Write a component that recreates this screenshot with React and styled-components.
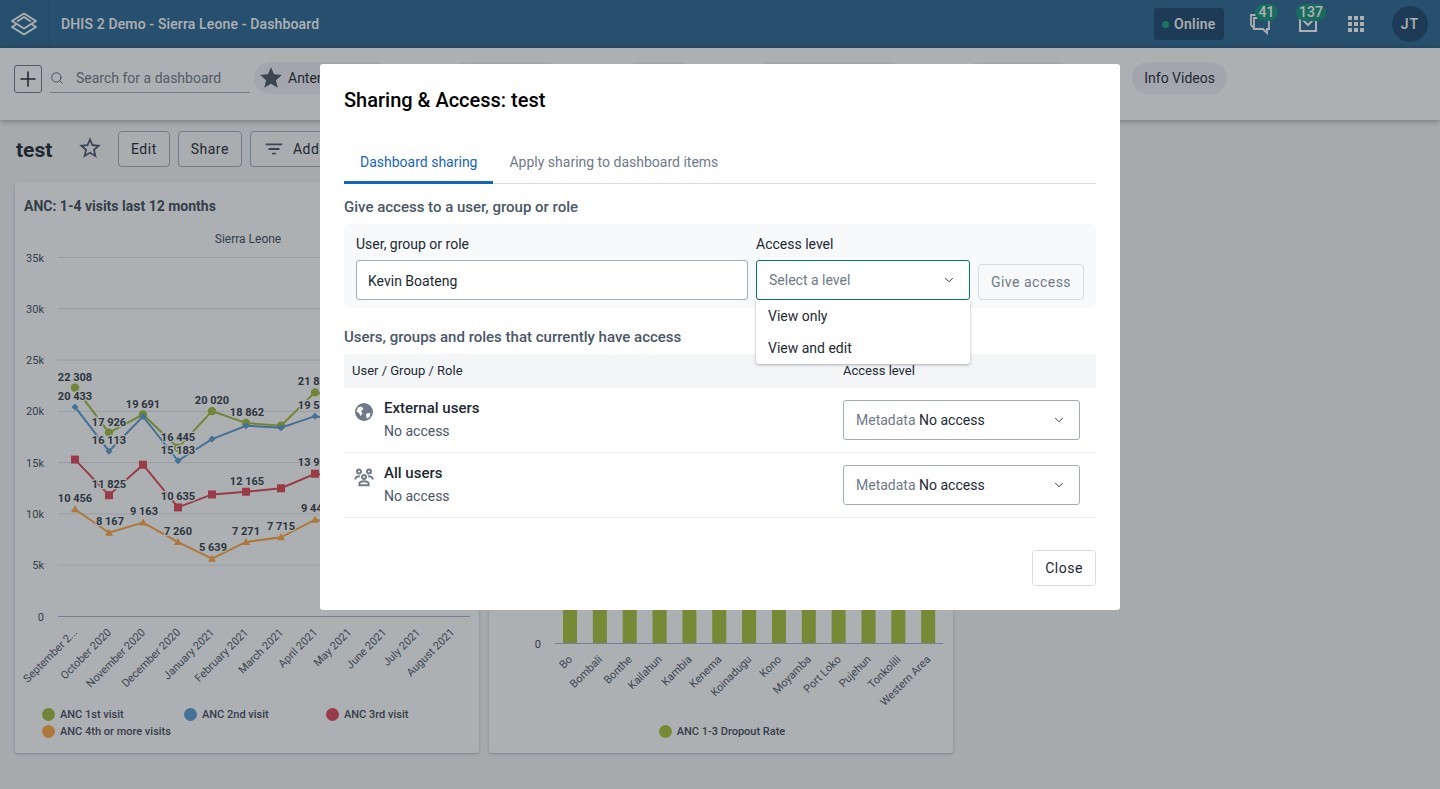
import React from 'react'
import styled, { createGlobalStyle } from 'styled-components'
import { Plus, Search, ChevronDown } from 'lucide-react'
import { MdStar, MdStarBorder, MdFilterList, MdApps } from 'react-icons/md'

const GlobalStyle = createGlobalStyle`
  html, body { margin: 0; padding: 0; height: 100%; overflow: hidden; }
  body {
    background: #f4f6f8;
    font-family: Roboto, "Liberation Sans", sans-serif;
    color: #212934;
  }
  * { box-sizing: border-box; }
`

const Page = styled.div`
  width: 1440px;
  height: 789px;
  overflow: hidden;
  background: #f4f6f8;
`

const Header = styled.header`
  height: 48px;
  background: #2c6693;
  display: flex;
  align-items: center;
  color: #fff;
`

const LogoBox = styled.div`
  width: 49px;
  height: 48px;
  display: flex;
  align-items: center;
  justify-content: center;
  border-right: 1px solid #27608c;
`

const AppTitle = styled.div`
  margin-left: 12px;
  font-size: 14px;
  font-weight: 500;
  letter-spacing: 0.14px;
  flex: 1;
`

const OnlineBadge = styled.div`
  width: 70px;
  height: 32px;
  border-radius: 3px;
  background: #1c476e;
  display: flex;
  align-items: center;
  gap: 5px;
  padding-left: 8px;
  font-size: 14px;
  font-weight: 500;
  letter-spacing: 0.3px;
`

const OnlineDot = styled.span`
  width: 7px;
  height: 7px;
  border-radius: 50%;
  background: #14a184;
`

const HeaderIcon = styled.div`
  position: relative;
  margin-left: 24px;
  width: 24px;
  height: 24px;
  display: flex;
  align-items: center;
  justify-content: center;
`

const CountBadge = styled.span`
  position: absolute;
  top: -8px;
  left: ${(props) => props.$left}px;
  height: 17px;
  min-width: 23px;
  padding: 0 3px;
  border-radius: 9px;
  background: #14927a;
  font-size: 14px;
  font-weight: 500;
  line-height: 17px;
  text-align: center;
`

const Avatar = styled.div`
  width: 36px;
  height: 36px;
  border-radius: 50%;
  background: #1c476e;
  margin-left: 24px;
  margin-right: 12px;
  display: flex;
  align-items: center;
  justify-content: center;
  font-size: 14px;
  font-weight: 500;
  letter-spacing: 1px;
`

const Toolbar = styled.div`
  height: 72px;
  background: #fff;
  box-shadow: 0 1px 6px rgba(0, 0, 0, 0.35);
  padding: 14px 14px 0;
  display: flex;
  align-items: flex-start;
  position: relative;
`

const AddButton = styled.div`
  width: 28px;
  height: 28px;
  margin-top: 3px;
  border: 1px solid #6c7787;
  border-radius: 3px;
  display: flex;
  align-items: center;
  justify-content: center;
`

const SearchBox = styled.div`
  width: 200px;
  height: 28px;
  margin: 3px 4px 0 8px;
  padding-bottom: 2px;
  border-bottom: 1px solid #a0adba;
  display: flex;
  align-items: center;
  gap: 12px;
  font-size: 14px;
  color: #6e7a8a;
`

const ChipRow = styled.div`
  width: 973px;
  display: flex;
  justify-content: space-between;
`

const Chip = styled.div`
  height: 32px;
  padding: 0 12px;
  padding-left: ${(props) => (props.$icon ? 4 : 12)}px;
  border-radius: 16px;
  background: #f0f1f7;
  display: flex;
  align-items: center;
  gap: 4px;
  font-size: 14px;
  white-space: nowrap;
  color: #212934;
`

const TitleRow = styled.div`
  height: 62px;
  padding: 11px 0 0 16px;
  display: flex;
  align-items: flex-start;
  gap: 8px;
`

const DashTitle = styled.h1`
  margin: 5px 0 0;
  width: 54px;
  font-size: 21px;
  line-height: 28px;
  font-weight: 700;
  color: #212934;
`

const StarWrap = styled.div`
  width: 33px;
  margin: 4px 0 0 -1px;
  color: #4a5768;
`

const GhostButton = styled.div`
  height: 36px;
  padding: 0 12px;
  border: 1px solid #a0adba;
  border-radius: 4px;
  display: flex;
  align-items: center;
  gap: 8px;
  font-size: 14px;
  letter-spacing: 0.5px;
  color: #212934;
  background: #f9fafb;
`

const CardGrid = styled.div`
  display: grid;
  grid-template-columns: 464px 464px;
  gap: 10px;
  padding-left: 15px;
`

const Card = styled.section`
  height: 571px;
  background: #fff;
  border-radius: 3px;
  box-shadow: 0 1px 3px rgba(33, 41, 52, 0.3);
`

const CardTitle = styled.h3`
  margin: 0;
  height: 48px;
  padding: 16px 9px 0;
  font-size: 14px;
  line-height: 16px;
  font-weight: 700;
  color: #404b5a;
`

const ChartSvg = styled.svg`
  display: block;
  width: 464px;
  height: 478px;
`

const LegendGrid = styled.div`
  display: grid;
  grid-template-columns: repeat(3, 142px);
  row-gap: 4px;
  padding-left: 27px;
`

const LegendCentered = styled.div`
  display: flex;
  justify-content: center;
  padding: 17px 0 0 2px;
`

const LegendItem = styled.div`
  display: flex;
  align-items: center;
  gap: 5px;
  height: 13px;
  font-size: 11px;
  font-weight: 500;
  color: #404b5a;
`

const LegendDot = styled.span`
  width: 13px;
  height: 13px;
  border-radius: 50%;
  background: ${(props) => props.$color};
`

const Overlay = styled.div`
  position: fixed;
  inset: 0;
  background: rgba(33, 40, 45, 0.37);
`

const Modal = styled.div`
  width: 800px;
  height: 546px;
  margin: 64px auto 0;
  padding: 24px;
  background: #fff;
  border-radius: 3px;
  position: relative;
`

const ModalTitle = styled.h2`
  margin: 0;
  height: 24px;
  font-size: 20px;
  line-height: 24px;
  font-weight: 500;
  color: #000;
`

const TabBar = styled.div`
  margin-top: 31px;
  height: 41px;
  display: flex;
  border-bottom: 1px solid #d5dde5;
`

const Tab = styled.div`
  height: 41px;
  padding: 0 16px;
  display: flex;
  align-items: center;
  padding-bottom: 1px;
  font-size: 14px;
  color: ${({ $active }) => ($active ? '#1565c0' : '#6e7a8a')};
  border-bottom: 3px solid ${({ $active }) => ($active ? '#1565c0' : 'transparent')};
`

const SectionTitle = styled.div`
  font-size: 15px;
  line-height: 16px;
  font-weight: 500;
  color: #4a5768;
  margin-top: ${(props) => props.$top}px;
`

const GiveBox = styled.div`
  position: relative;
  margin-top: 9px;
  height: 84px;
  padding: 12px 12px 8px;
  background: #f8f9fa;
  border-radius: 5px;
  display: flex;
  align-items: flex-end;
  gap: 8px;
`

const Field = styled.div`
  width: ${(props) => props.$width}px;
  position: relative;
`

const FieldLabel = styled.div`
  font-size: 14px;
  line-height: 16px;
  margin-bottom: 8px;
  color: #212934;
`

const Input = styled.div`
  height: 40px;
  padding: 0 13px 0 12px;
  background: #fff;
  border: 1px solid ${({ $focus }) => ($focus ? '#00796b' : '#a0adba')};
  border-radius: 3px;
  display: flex;
  align-items: center;
  justify-content: space-between;
  font-size: 14px;
  color: #212934;
`

const TextInput = styled(Input)`
  padding: 2px 12px 0 11px;
`

const Muted = styled.span`
  color: #6e7a8a;
`

const GiveButton = styled.div`
  width: 106px;
  height: 36px;
  border: 1px solid #d5dde5;
  border-radius: 4px;
  display: flex;
  align-items: center;
  justify-content: center;
  font-size: 14px;
  letter-spacing: 0.5px;
  color: #6e7a8a;
  background: #f8f9fa;
`

const Menu = styled.div`
  position: absolute;
  top: 64px;
  left: 0;
  width: 214px;
  height: 64px;
  background: #fff;
  border-radius: 0 0 3px 3px;
  box-shadow: 0 1px 3px rgba(33, 41, 52, 0.35);
  z-index: 2;
`

const MenuItem = styled.div`
  height: 32px;
  padding-left: 12px;
  display: flex;
  align-items: center;
  font-size: 14px;
  color: #212934;
`

const TableHead = styled.div`
  margin-top: 9px;
  height: 34px;
  padding: 0 0 2px 8px;
  background: #f3f5f7;
  display: grid;
  grid-template-columns: 491px 1fr;
  align-items: center;
  font-size: 13px;
  color: #212934;
`

const Row = styled.div`
  height: 65px;
  padding: 12px 16px 0 10px;
  border-bottom: 1px solid #e8edf2;
  display: flex;
  align-items: flex-start;
`

const RowIcon = styled.div`
  width: 30px;
  margin-top: 2px;
  display: flex;
`

const RowText = styled.div`
  flex: 1;
`

const RowName = styled.div`
  font-size: 15px;
  line-height: 16px;
  font-weight: 500;
  color: #212934;
`

const RowSub = styled.div`
  margin-top: 7px;
  font-size: 14px;
  line-height: 16px;
  color: #4a5768;
`

const RowSelect = styled(Input)`
  width: 237px;
`

const Footer = styled.div`
  margin-top: 32px;
  display: flex;
  justify-content: flex-end;
`

const CloseButton = styled.div`
  width: 64px;
  height: 36px;
  border: 1px solid #d5dde5;
  border-radius: 4px;
  display: flex;
  align-items: center;
  justify-content: center;
  font-size: 14px;
  letter-spacing: 0.5px;
  color: #212934;
  background: #fff;
`

const COLORS = { green: '#a0bc3c', blue: '#5b9bd5', red: '#e0465a', orange: '#ffa640', bar: '#a8c23a' }

const XS = [75, 109, 143, 178, 212, 246, 281, 315, 349, 384, 418, 452]

function valueToY (value) {
  return 616.5 - (value * 359) / 35000
}

const SERIES = [
  {
    color: COLORS.green,
    shape: 'circle',
    values: [22308, 17926, 19691, 16445, 20020, 18862, 18600, 21850, 21000, 21500, 20000, 19000],
    labels: [[75, 377, '22 308'], [109, 422, '17 926'], [143, 404, '19 691'], [178, 437, '16 445'], [212, 400, '20 020'], [247, 412, '18 862'], [315, 381, '21 850']]
  },
  {
    color: COLORS.blue,
    shape: 'diamond',
    values: [20433, 16113, 19500, 15183, 17300, 18600, 18400, 19530, 19000, 19500, 18500, 18000],
    labels: [[75, 396, '20 433'], [109, 440, '16 113'], [178, 450, '15 183'], [315, 405, '19 530']]
  },
  {
    color: COLORS.red,
    shape: 'square',
    values: [15300, 11825, 14800, 10635, 11900, 12165, 12500, 13920, 13500, 14000, 13000, 12500],
    labels: [[109, 484, '11 825'], [178, 496, '10 635'], [247, 481, '12 165'], [315, 462, '13 920']]
  },
  {
    color: COLORS.orange,
    shape: 'triangle',
    values: [10456, 8167, 9163, 7260, 5639, 7271, 7715, 9440, 9000, 9500, 8500, 8000],
    labels: [[75, 498, '10 456'], [110, 521, '8 167'], [144, 511, '9 163'], [178, 531, '7 260'], [213, 547, '5 639'], [246, 531, '7 271'], [281, 526, '7 715'], [315, 508, '9 440']]
  }
]

const MONTHS = ['September 2...', 'October 2020', 'November 2020', 'December 2020', 'January 2021', 'February 2021', 'March 2021', 'April 2021', 'May 2021', 'June 2021', 'July 2021', 'August 2021']
const DISTRICTS = ['Bo', 'Bombali', 'Bonthe', 'Kailahun', 'Kambia', 'Kenema', 'Koinadugu', 'Kono', 'Moyamba', 'Port Loko', 'Pujehun', 'Tonkolili', 'Western Area']
const CHIPS = ['Cases Malaria', 'Delivery', 'Disease Surveillance', 'Immunization']

const Marker = ({ shape, x, y, color }) => {
  if (shape === 'circle') return <circle cx={x} cy={y} r={4.2} fill={color} />
  if (shape === 'square') return <rect x={x - 4} y={y - 4} width={8} height={8} fill={color} />
  if (shape === 'diamond') return <path d={`M${x} ${y - 3.5}L${x + 3.5} ${y}L${x} ${y + 3.5}L${x - 3.5} ${y}Z`} fill={color} />
  return <path d={`M${x} ${y - 4}L${x + 4} ${y + 3}L${x - 4} ${y + 3}Z`} fill={color} />
}

const LineChart = () => (
  <ChartSvg viewBox="15 230 464 478">
    <text x="248" y="243" textAnchor="middle" fontSize="12" fill="#404b5a">Sierra Leone</text>
    {[5, 10, 15, 20, 25, 30, 35].map((k) => (
      <g key={k}>
        <line x1="58" x2="470" y1={valueToY(k * 1000)} y2={valueToY(k * 1000)} stroke="#dfe4ea" />
        <text x="44" y={valueToY(k * 1000) + 4} textAnchor="end" fontSize="11" fill="#404b5a">{k}k</text>
      </g>
    ))}
    <line x1="58" x2="470" y1="616.5" y2="616.5" stroke="#a5b4d0" />
    <text x="44" y="621" textAnchor="end" fontSize="11" fill="#404b5a">0</text>
    {SERIES.map((s) => (
      <g key={s.color}>
        <polyline points={s.values.map((v, i) => `${XS[i]},${valueToY(v)}`).join(' ')} fill="none" stroke={s.color} strokeWidth="2" />
        {s.values.map((v, i) => <Marker key={i} shape={s.shape} x={XS[i]} y={valueToY(v)} color={s.color} />)}
      </g>
    ))}
    {SERIES.map((s) => s.labels.map(([x, y, t]) => (
      <text key={t} x={x} y={y + 4} textAnchor="middle" fontSize="11" fontWeight="700" fill="#333d4a" stroke="#fff" strokeWidth="2.5" paintOrder="stroke">{t}</text>
    )))}
    {MONTHS.map((m, i) => (
      <text key={m} x={XS[i] + 3} y={633} textAnchor="end" fontSize="11" fill="#4a5768" transform={`rotate(-45 ${XS[i] + 3} 633)`}>{m}</text>
    ))}
  </ChartSvg>
)

const BarChart = () => (
  <ChartSvg viewBox="489 230 464 478">
    {DISTRICTS.map((d, i) => {
      const x = 563 + i * 29.85
      return (
        <g key={d}>
          <rect x={x} y="520" width="14" height="123" fill={COLORS.bar} />
          <text x={x + 10} y={660} textAnchor="end" fontSize="11" fill="#4a5768" transform={`rotate(-45 ${x + 10} 660)`}>{d}</text>
        </g>
      )
    })}
    <line x1="555" x2="943" y1="643.5" y2="643.5" stroke="#a5b4d0" />
    <text x="541" y="648" textAnchor="end" fontSize="11" fill="#404b5a">0</text>
  </ChartSvg>
)

const ChatIcon = () => (
  <svg width="24" height="24" viewBox="0 0 24 24" fill="none" stroke="#fff" strokeWidth="1.8">
    <path d="M8 3H3V13L6 16" />
    <path d="M6 6H21V17H19V21L15 17H6Z" />
  </svg>
)

const MailIcon = () => (
  <svg width="24" height="24" viewBox="0 0 24 24" fill="none" stroke="#fff" strokeWidth="2">
    <path d="M4 5V19H20V5" />
    <path d="M7 8L12 13L17 8" />
  </svg>
)

const Logo = () => (
  <svg width="28" height="24" viewBox="0 0 28 24" fill="none" stroke="#fff" strokeWidth="1.9" strokeLinejoin="round">
    <path d="M14 1.5L26 9L14 16.5L2 9Z" />
    <path d="M7 9.5L14 5L21 9.5" />
    <path d="M7 11.8L2 15L14 22.5L26 15L21 11.8" />
  </svg>
)

const GlobeIcon = () => (
  <svg width="20" height="20" viewBox="0 0 20 20">
    <circle cx="10" cy="10" r="9" fill="#6e7a8a" />
    <path d="M4 5.5L7.5 4.5L9.5 7L7 9L8.5 11.5L6.5 14L5 11L2.5 9.5Z" fill="#fff" />
    <path d="M12.5 11.5L16.5 11L15.5 15L13 16.5L12 14Z" fill="#fff" />
  </svg>
)

const GroupIcon = () => (
  <svg width="20" height="20" viewBox="0 0 24 24" fill="none" stroke="#6e7a8a" strokeWidth="2.4">
    <circle cx="6" cy="5.5" r="2.4" />
    <circle cx="18" cy="5.5" r="2.4" />
    <circle cx="12" cy="12" r="2.4" />
    <path d="M6.5 22V20C6.5 17.5 9.5 17 12 17C14.5 17 17.5 17.5 17.5 20V22Z" />
    <path d="M1.5 15C1.5 12.5 3.5 11 7 11" />
    <path d="M22.5 15C22.5 12.5 20.5 11 17 11" />
  </svg>
)

const App = () => (
  <Page>
    <GlobalStyle />
    <Header>
      <LogoBox><Logo /></LogoBox>
      <AppTitle>DHIS 2 Demo - Sierra Leone - Dashboard</AppTitle>
      <OnlineBadge><OnlineDot />Online</OnlineBadge>
      <HeaderIcon><ChatIcon /><CountBadge $left={7}>41</CountBadge></HeaderIcon>
      <HeaderIcon><MailIcon /><CountBadge $left={0}>137</CountBadge></HeaderIcon>
      <HeaderIcon><MdApps size={28} color="#fff" /></HeaderIcon>
      <Avatar>JT</Avatar>
    </Header>
    <Toolbar>
      <AddButton><Plus size={24} strokeWidth={1.6} color="#212934" /></AddButton>
      <SearchBox><Search size={14} strokeWidth={1.5} color="#4a5768" />Search for a dashboard</SearchBox>
      <ChipRow>
        <Chip $icon><MdStar size={26} color="#4a5768" />Antenatal Care</Chip>
        {CHIPS.map((c) => <Chip key={c}>{c}</Chip>)}
        <Chip>Info Videos</Chip>
      </ChipRow>
    </Toolbar>
    <TitleRow>
      <DashTitle>test</DashTitle>
      <StarWrap><MdStarBorder size={26} /></StarWrap>
      <GhostButton>Edit</GhostButton>
      <GhostButton>Share</GhostButton>
      <GhostButton><MdFilterList size={22} color="#4a5768" />Add filter</GhostButton>
    </TitleRow>
    <CardGrid>
      <Card>
        <CardTitle>ANC: 1-4 visits last 12 months</CardTitle>
        <LineChart />
        <LegendGrid>
          <LegendItem><LegendDot $color={COLORS.green} />ANC 1st visit</LegendItem>
          <LegendItem><LegendDot $color={COLORS.blue} />ANC 2nd visit</LegendItem>
          <LegendItem><LegendDot $color={COLORS.red} />ANC 3rd visit</LegendItem>
          <LegendItem><LegendDot $color={COLORS.orange} />ANC 4th or more visits</LegendItem>
        </LegendGrid>
      </Card>
      <Card>
        <CardTitle />
        <BarChart />
        <LegendCentered>
          <LegendItem><LegendDot $color={COLORS.bar} />ANC 1-3 Dropout Rate</LegendItem>
        </LegendCentered>
      </Card>
    </CardGrid>
    <Overlay>
      <Modal>
        <ModalTitle>Sharing &amp; Access: test</ModalTitle>
        <TabBar>
          <Tab $active>Dashboard sharing</Tab>
          <Tab>Apply sharing to dashboard items</Tab>
        </TabBar>
        <SectionTitle $top={15}>Give access to a user, group or role</SectionTitle>
        <GiveBox>
          <Field $width={392}>
            <FieldLabel>User, group or role</FieldLabel>
            <TextInput>Kevin Boateng</TextInput>
          </Field>
          <Field $width={214}>
            <FieldLabel>Access level</FieldLabel>
            <Input $focus><Muted>Select a level</Muted><ChevronDown size={14} strokeWidth={1.6} /></Input>
            <Menu>
              <MenuItem>View only</MenuItem>
              <MenuItem>View and edit</MenuItem>
            </Menu>
          </Field>
          <GiveButton>Give access</GiveButton>
        </GiveBox>
        <SectionTitle $top={21}>Users, groups and roles that currently have access</SectionTitle>
        <TableHead><span>User / Group / Role</span><span>Access level</span></TableHead>
        <Row>
          <RowIcon><GlobeIcon /></RowIcon>
          <RowText><RowName>External users</RowName><RowSub>No access</RowSub></RowText>
          <RowSelect><span><Muted>Metadata</Muted> No access</span><ChevronDown size={14} strokeWidth={1.6} /></RowSelect>
        </Row>
        <Row>
          <RowIcon><GroupIcon /></RowIcon>
          <RowText><RowName>All users</RowName><RowSub>No access</RowSub></RowText>
          <RowSelect><span><Muted>Metadata</Muted> No access</span><ChevronDown size={14} strokeWidth={1.6} /></RowSelect>
        </Row>
        <Footer><CloseButton>Close</CloseButton></Footer>
      </Modal>
    </Overlay>
  </Page>
)

export default App
